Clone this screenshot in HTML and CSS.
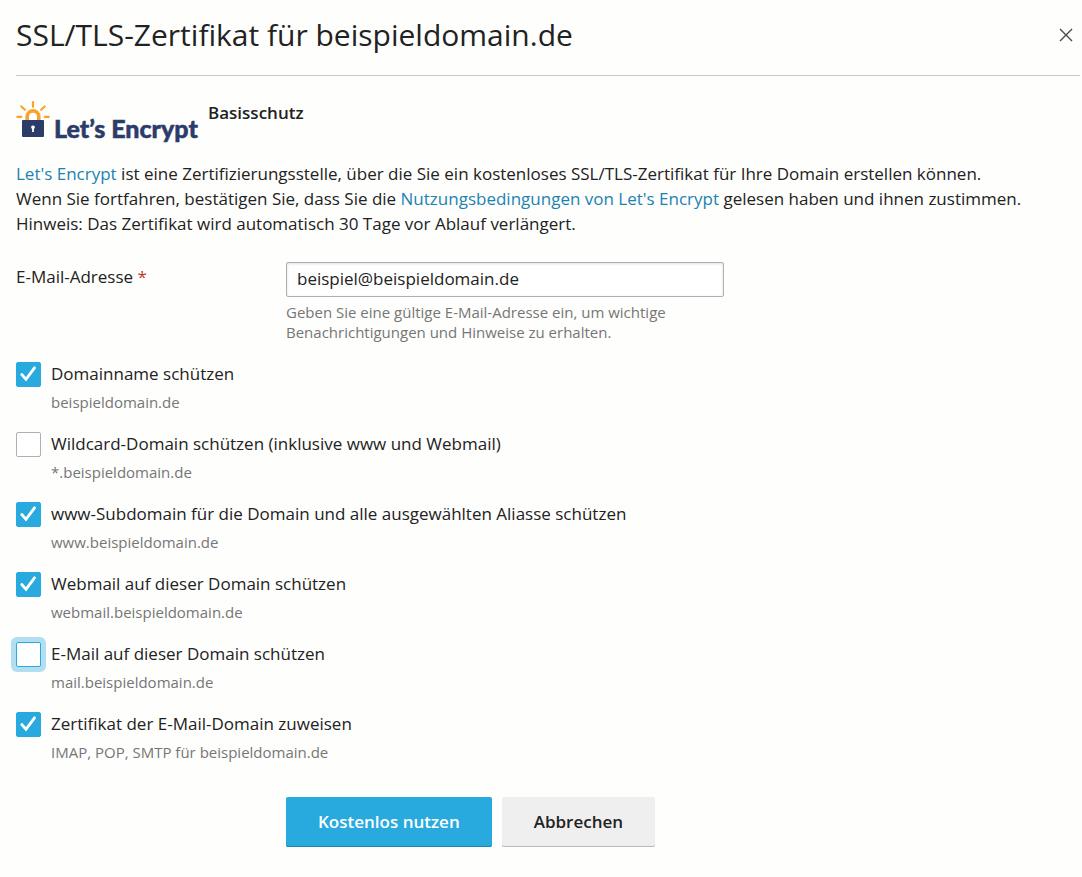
FILE: index.html
```html
<!DOCTYPE html>
<html lang="de">
<head>
    <meta charset="UTF-8">
    <meta name="viewport" content="width=device-width, initial-scale=1.0">
    <title>SSL/TLS-Zertifikat für beispieldomain.de</title>
    <link rel="stylesheet" href="styles.css">
</head>
<body>
    <!-- Header -->
    <header class="header">
        <h1>SSL/TLS-Zertifikat für beispieldomain.de</h1>
        <button type="button" class="close-button" aria-label="Schließen">
            <svg width="14" height="14" viewBox="0 0 14 14"><path d="M1 1l12 12M13 1L1 13" stroke="#4a4a4e" stroke-width="1.4"/></svg>
        </button>
    </header>

    <main>
        <!-- Logo -->
        <div class="brand">
            <svg class="logo" width="182" height="46" viewBox="0 0 182 46" role="img" aria-label="Let's Encrypt">
                <g fill="none" stroke="#f9a32c" stroke-width="2.2" stroke-linecap="round">
                    <path d="M17 2v4.800M5.300 6.500l3.600 3.300M28.700 6.500l-3.600 3.300M1.300 16.800h4M28.700 16.800h4"/>
                    <path d="M11.200 21v-4.300a5.800 5.800 0 0 1 11.600 0v4.300" stroke-width="3.600" stroke-linecap="butt"/>
                </g>
                <rect x="6" y="20" width="22" height="17" rx="1" fill="#2c3c69"/>
                <path d="M17 25.500a1.800 1.800 0 0 1 .9 3.400v3h-1.800v-3a1.800 1.800 0 0 1 .9-3.400z" fill="#fff"/>
                <text x="38" y="38" class="logo-text">Let’s Encrypt</text>
            </svg>
            <h2>Basisschutz</h2>
        </div>

        <p class="intro">
            <a href="#">Let's Encrypt</a> ist eine Zertifizierungsstelle, über die Sie ein kostenloses SSL/TLS-Zertifikat für Ihre Domain erstellen können.<br>
            Wenn Sie fortfahren, bestätigen Sie, dass Sie die <a href="#">Nutzungsbedingungen von Let's Encrypt</a> gelesen haben und ihnen zustimmen.<br>
            Hinweis: Das Zertifikat wird automatisch 30 Tage vor Ablauf verlängert.
        </p>

        <form>
            <div class="form-row">
                <label for="email">E-Mail-Adresse <span class="required">*</span></label>
                <div class="field">
                    <input type="text" id="email" value="beispiel@beispieldomain.de">
                    <div class="hint">Geben Sie eine gültige E-Mail-Adresse ein, um wichtige Benachrichtigungen und Hinweise zu erhalten.</div>
                </div>
            </div>

            <!-- Options -->
            <div class="option">
                <input type="checkbox" id="domain" checked>
                <label for="domain">Domainname schützen</label>
                <div class="hint">beispieldomain.de</div>
            </div>
            <div class="option">
                <input type="checkbox" id="wildcard">
                <label for="wildcard">Wildcard-Domain schützen (inklusive www und Webmail)</label>
                <div class="hint">*.beispieldomain.de</div>
            </div>
            <div class="option">
                <input type="checkbox" id="www" checked>
                <label for="www">www-Subdomain für die Domain und alle ausgewählten Aliasse schützen</label>
                <div class="hint">www.beispieldomain.de</div>
            </div>
            <div class="option">
                <input type="checkbox" id="webmail" checked>
                <label for="webmail">Webmail auf dieser Domain schützen</label>
                <div class="hint">webmail.beispieldomain.de</div>
            </div>
            <div class="option">
                <input type="checkbox" id="mail" class="focused">
                <label for="mail">E-Mail auf dieser Domain schützen</label>
                <div class="hint">mail.beispieldomain.de</div>
            </div>
            <div class="option">
                <input type="checkbox" id="assign" checked>
                <label for="assign">Zertifikat der E-Mail-Domain zuweisen</label>
                <div class="hint">IMAP, POP, SMTP für beispieldomain.de</div>
            </div>

            <!-- Buttons -->
            <div class="actions">
                <button type="submit" class="btn btn-primary">Kostenlos nutzen</button>
                <button type="button" class="btn">Abbrechen</button>
            </div>
        </form>
    </main>
</body>
</html>
```
FILE: styles.css
```css
* {
    box-sizing: border-box;
}

body {
    margin: 0;
    padding: 0 2px 30px 16px;
    background-color: #fefefd;
    color: #222;
    font-family: "Open Sans", sans-serif;
    font-size: 17px;
    line-height: 25px;
}

a {
    color: #1b83b0;
    text-decoration: none;
}

a:hover {
    text-decoration: underline;
}

/* Header */
.header {
    display: flex;
    align-items: center;
    justify-content: space-between;
    padding: 15px 0 20px;
    border-bottom: 1px solid #c8c8c8;
}

h1 {
    margin: 0;
    font-size: 30px;
    font-weight: 400;
    line-height: 40px;
}

.close-button {
    display: flex;
    padding: 7px;
    border: none;
    background: none;
    cursor: pointer;
}

/* Logo */
.brand {
    display: flex;
    gap: 10px;
    padding-top: 24px;
}

.logo {
    overflow: visible;
}

.logo-text {
    fill: #2c3c69;
    stroke: #2c3c69;
    stroke-width: 0.5;
    font-family: Lato, sans-serif;
    font-size: 25px;
    font-weight: 900;
}

h2 {
    margin: 0;
    font-size: 17px;
    font-weight: 600;
    line-height: 25px;
}

.intro {
    margin: 15px 0 26px;
}

/* Form */
.form-row {
    display: flex;
    margin-bottom: 20px;
}

.form-row > label {
    width: 270px;
    padding-top: 2px;
}

.required {
    color: #c0392b;
}

.field {
    width: 438px;
}

.field input {
    display: block;
    width: 100%;
    height: 35px;
    margin-bottom: 5px;
    padding: 0 10px 2px;
    border: 1px solid #b0b0b0;
    border-radius: 2px;
    background-color: #fff;
    box-shadow: inset 0 1px 3px rgba(0, 0, 0, 0.12);
    color: #222;
    font: inherit;
}

.hint {
    color: #767676;
    font-size: 15px;
    line-height: 20px;
}

/* Checkboxes */
.option {
    display: grid;
    grid-template-columns: 25px 1fr;
    column-gap: 10px;
    row-gap: 5px;
    margin-bottom: 20px;
}

.option label {
    line-height: 23px;
}

.option .hint {
    grid-column: 2;
}

.option input {
    appearance: none;
    width: 25px;
    height: 25px;
    margin: 0;
    border: 1px solid #b0b0b0;
    border-radius: 2px;
    background-color: #fff;
}

.option input:checked {
    border-color: #28aade;
    background: #28aade url('data:image/svg+xml,<svg xmlns="http://www.w3.org/2000/svg" viewBox="0 0 23 23"><path d="M4.800 11.500l4.200 4.800L17.500 4.800" fill="none" stroke="white" stroke-width="2.800" stroke-linecap="round"/></svg>');
}

.option input.focused {
    border-color: #28aade;
    box-shadow: 0 0 0 5px #b2def1;
}

/* Buttons */
.actions {
    display: flex;
    gap: 10px;
    padding: 15px 0 0 270px;
}

.btn {
    height: 50px;
    padding: 0 32px 2px;
    border: none;
    border-radius: 2px;
    background-color: #efefef;
    box-shadow: inset 0 -1px 0 #b8b8b8;
    color: #222;
    font: inherit;
    font-weight: 600;
    cursor: pointer;
}

.btn-primary {
    background-color: #28aade;
    box-shadow: inset 0 -1px 0 #1f85af;
    color: #fff;
}
```
